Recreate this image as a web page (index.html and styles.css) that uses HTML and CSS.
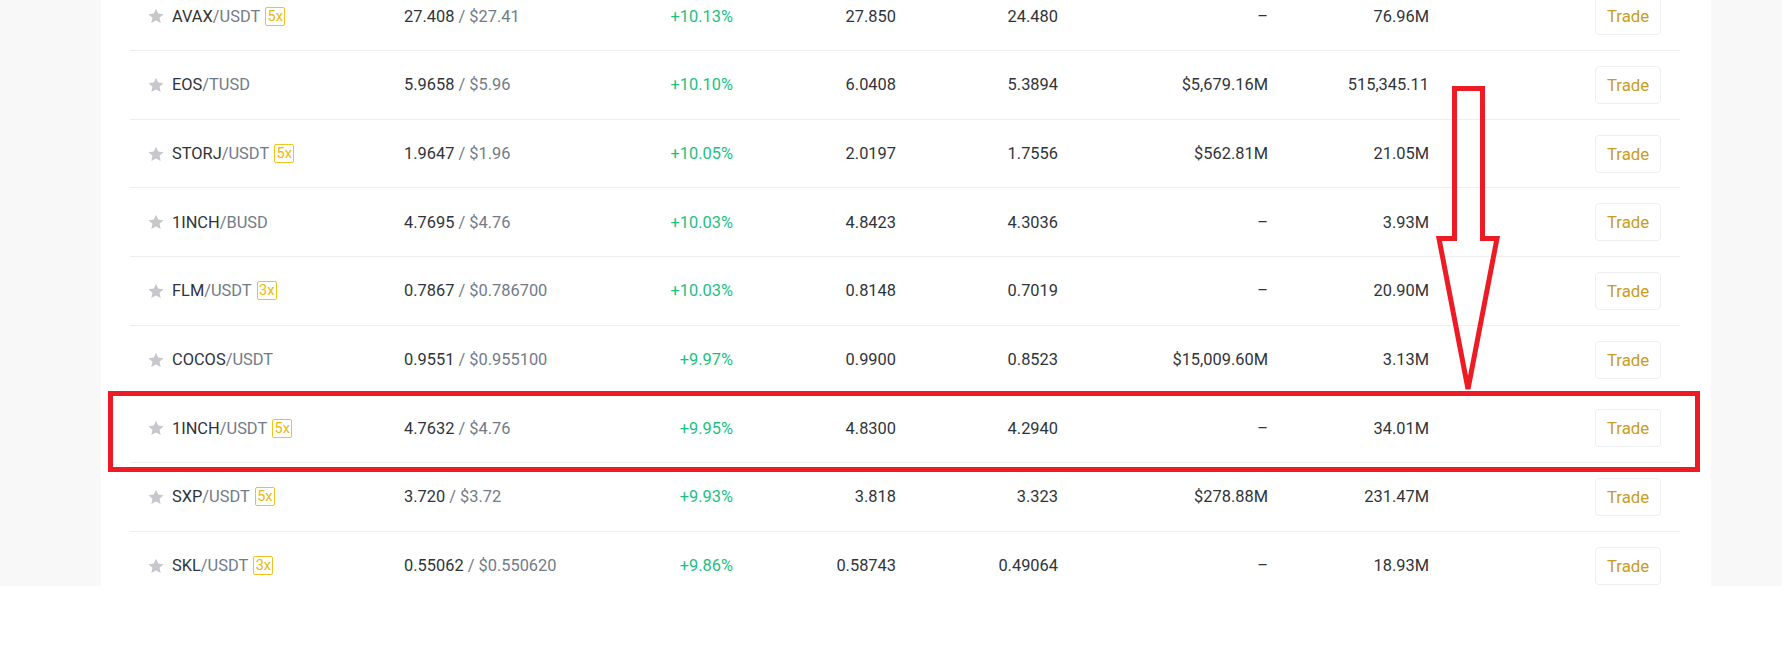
FILE: index.html
```html
<!DOCTYPE html>
<html lang="en">
<head>
<meta charset="utf-8">
<title>Markets</title>
<link rel="stylesheet" href="styles.css">
</head>
<body>
<div class="stage">
  <div class="card">
    <div class="table">
      <div class="row">
        <div class="pair"><svg class="star" viewBox="0 0 24 24"><path d="M12 2.2l2.95 6.6 7.15.75-5.35 4.85 1.5 7.05L12 17.85 5.75 21.45l1.5-7.05L1.9 9.55l7.15-.75z"/></svg><span class="base">AVAX</span><span class="quote">/USDT</span><span class="lev">5x</span></div>
        <div class="price">27.408<span class="usd"> / $27.41</span></div>
        <div class="num up">+10.13%</div>
        <div class="num">27.850</div>
        <div class="num">24.480</div>
        <div class="num">–</div>
        <div class="num">76.96M</div>
        <div class="act"><button class="trade">Trade</button></div>
      </div>
      <div class="row">
        <div class="pair"><svg class="star" viewBox="0 0 24 24"><path d="M12 2.2l2.95 6.6 7.15.75-5.35 4.85 1.5 7.05L12 17.85 5.75 21.45l1.5-7.05L1.9 9.55l7.15-.75z"/></svg><span class="base">EOS</span><span class="quote">/TUSD</span></div>
        <div class="price">5.9658<span class="usd"> / $5.96</span></div>
        <div class="num up">+10.10%</div>
        <div class="num">6.0408</div>
        <div class="num">5.3894</div>
        <div class="num">$5,679.16M</div>
        <div class="num">515,345.11</div>
        <div class="act"><button class="trade">Trade</button></div>
      </div>
      <div class="row">
        <div class="pair"><svg class="star" viewBox="0 0 24 24"><path d="M12 2.2l2.95 6.6 7.15.75-5.35 4.85 1.5 7.05L12 17.85 5.75 21.45l1.5-7.05L1.9 9.55l7.15-.75z"/></svg><span class="base">STORJ</span><span class="quote">/USDT</span><span class="lev">5x</span></div>
        <div class="price">1.9647<span class="usd"> / $1.96</span></div>
        <div class="num up">+10.05%</div>
        <div class="num">2.0197</div>
        <div class="num">1.7556</div>
        <div class="num">$562.81M</div>
        <div class="num">21.05M</div>
        <div class="act"><button class="trade">Trade</button></div>
      </div>
      <div class="row">
        <div class="pair"><svg class="star" viewBox="0 0 24 24"><path d="M12 2.2l2.95 6.6 7.15.75-5.35 4.85 1.5 7.05L12 17.85 5.75 21.45l1.5-7.05L1.9 9.55l7.15-.75z"/></svg><span class="base">1INCH</span><span class="quote">/BUSD</span></div>
        <div class="price">4.7695<span class="usd"> / $4.76</span></div>
        <div class="num up">+10.03%</div>
        <div class="num">4.8423</div>
        <div class="num">4.3036</div>
        <div class="num">–</div>
        <div class="num">3.93M</div>
        <div class="act"><button class="trade">Trade</button></div>
      </div>
      <div class="row">
        <div class="pair"><svg class="star" viewBox="0 0 24 24"><path d="M12 2.2l2.95 6.6 7.15.75-5.35 4.85 1.5 7.05L12 17.85 5.75 21.45l1.5-7.05L1.9 9.55l7.15-.75z"/></svg><span class="base">FLM</span><span class="quote">/USDT</span><span class="lev">3x</span></div>
        <div class="price">0.7867<span class="usd"> / $0.786700</span></div>
        <div class="num up">+10.03%</div>
        <div class="num">0.8148</div>
        <div class="num">0.7019</div>
        <div class="num">–</div>
        <div class="num">20.90M</div>
        <div class="act"><button class="trade">Trade</button></div>
      </div>
      <div class="row">
        <div class="pair"><svg class="star" viewBox="0 0 24 24"><path d="M12 2.2l2.95 6.6 7.15.75-5.35 4.85 1.5 7.05L12 17.85 5.75 21.45l1.5-7.05L1.9 9.55l7.15-.75z"/></svg><span class="base">COCOS</span><span class="quote">/USDT</span></div>
        <div class="price">0.9551<span class="usd"> / $0.955100</span></div>
        <div class="num up">+9.97%</div>
        <div class="num">0.9900</div>
        <div class="num">0.8523</div>
        <div class="num">$15,009.60M</div>
        <div class="num">3.13M</div>
        <div class="act"><button class="trade">Trade</button></div>
      </div>
      <div class="row">
        <div class="pair"><svg class="star" viewBox="0 0 24 24"><path d="M12 2.2l2.95 6.6 7.15.75-5.35 4.85 1.5 7.05L12 17.85 5.75 21.45l1.5-7.05L1.9 9.55l7.15-.75z"/></svg><span class="base">1INCH</span><span class="quote">/USDT</span><span class="lev">5x</span></div>
        <div class="price">4.7632<span class="usd"> / $4.76</span></div>
        <div class="num up">+9.95%</div>
        <div class="num">4.8300</div>
        <div class="num">4.2940</div>
        <div class="num">–</div>
        <div class="num">34.01M</div>
        <div class="act"><button class="trade">Trade</button></div>
      </div>
      <div class="row">
        <div class="pair"><svg class="star" viewBox="0 0 24 24"><path d="M12 2.2l2.95 6.6 7.15.75-5.35 4.85 1.5 7.05L12 17.85 5.75 21.45l1.5-7.05L1.9 9.55l7.15-.75z"/></svg><span class="base">SXP</span><span class="quote">/USDT</span><span class="lev">5x</span></div>
        <div class="price">3.720<span class="usd"> / $3.72</span></div>
        <div class="num up">+9.93%</div>
        <div class="num">3.818</div>
        <div class="num">3.323</div>
        <div class="num">$278.88M</div>
        <div class="num">231.47M</div>
        <div class="act"><button class="trade">Trade</button></div>
      </div>
      <div class="row">
        <div class="pair"><svg class="star" viewBox="0 0 24 24"><path d="M12 2.2l2.95 6.6 7.15.75-5.35 4.85 1.5 7.05L12 17.85 5.75 21.45l1.5-7.05L1.9 9.55l7.15-.75z"/></svg><span class="base">SKL</span><span class="quote">/USDT</span><span class="lev">3x</span></div>
        <div class="price">0.55062<span class="usd"> / $0.550620</span></div>
        <div class="num up">+9.86%</div>
        <div class="num">0.58743</div>
        <div class="num">0.49064</div>
        <div class="num">–</div>
        <div class="num">18.93M</div>
        <div class="act"><button class="trade">Trade</button></div>
      </div>
    </div>
  </div>
</div>
<svg class="annot" viewBox="0 0 1782 648" width="1782" height="648">
  <rect x="110.5" y="393.5" width="1587" height="76" fill="none" stroke="#ed1c24" stroke-width="5"/>
  <polygon points="1454.5,88.5 1482.5,88.5 1482.5,238.5 1497,238.5 1468,389 1439,238.5 1454.5,238.5" fill="none" stroke="#ed1c24" stroke-width="5" stroke-linejoin="miter"/>
</svg>
</body>
</html>
```
FILE: styles.css
```css
html, body {
  margin: 0;
  padding: 0;
  background: #ffffff;
}
body {
  position: relative;
  width: 1782px;
  height: 648px;
  overflow: hidden;
  font-family: "Roboto", "Liberation Sans", sans-serif;
  font-size: 16.4px;
  color: #2f343a;
}
.stage {
  height: 586px;
  background: #f8f8f8;
  padding: 0 71px 0 101px;
  overflow: hidden;
}
.card {
  background: #ffffff;
  height: 586px;
  padding: 0 31px 0 29px;
  overflow: hidden;
}
.table {
  margin-top: -17.7px;
}
.row {
  display: grid;
  grid-template-columns: 257px 190px 139px 163px 162px 210px 161px 232px;
  align-items: center;
  height: 68.7px;
  box-sizing: border-box;
  padding: 0 19px 0 17px;
  border-bottom: 1px solid #eceef0;
}
.pair {
  display: flex;
  align-items: center;
}
.star {
  width: 18px;
  height: 18px;
  fill: #c6c8cb;
  margin-right: 7px;
  flex: none;
}
.base {
  color: #2f343a;
}
.quote {
  color: #727b88;
}
.lev {
  margin-left: 5px;
  box-sizing: border-box;
  width: 20px;
  height: 19px;
  border: 1px solid #f0c51a;
  border-radius: 2px;
  color: #e8b80e;
  font-size: 14.5px;
  line-height: 17px;
  text-align: center;
}
.price {
  color: #2f343a;
}
.usd {
  color: #727b88;
}
.num {
  text-align: right;
  color: #2f343a;
}
.up {
  color: #1ebf7f;
}
.act {
  display: flex;
  justify-content: flex-end;
}
.trade {
  width: 66px;
  height: 38px;
  box-sizing: border-box;
  border: 1px solid #eceef0;
  border-radius: 4px;
  background: #ffffff;
  color: #c99c22;
  font-family: "Roboto", "Liberation Sans", sans-serif;
  font-size: 16.8px;
  padding: 0;
}
.annot {
  position: absolute;
  top: 0;
  left: 0;
  pointer-events: none;
}
```
